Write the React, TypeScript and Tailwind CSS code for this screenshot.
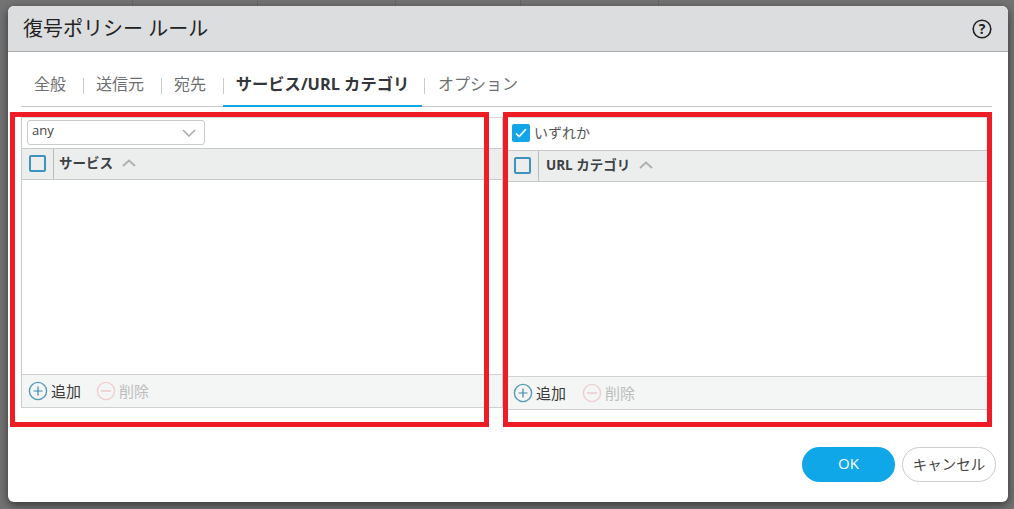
import React from "react";

const FONT = "font-['Open_Sans','Noto_Sans_CJK_JP',sans-serif]";

function SortUp() {
    return (
        <svg width="14" height="8" viewBox="0 0 14 8" fill="none" stroke="#aeb0b0" strokeWidth="2">
            <path d="M1 7l6-5.5L13 7" />
        </svg>
    );
}

function AddIcon() {
    return (
        <svg width="20" height="20" viewBox="0 0 20 20" fill="none">
            <circle cx="10" cy="10" r="8.6" stroke="#5b9aba" strokeWidth="1.4" />
            <path d="M10 5.5v9M5.5 10h9" stroke="#3f86aa" strokeWidth="1.2" />
        </svg>
    );
}

function RemoveIcon() {
    return (
        <svg width="20" height="20" viewBox="0 0 20 20" fill="none">
            <circle cx="10" cy="10" r="8.6" stroke="#efcfd0" strokeWidth="1.4" />
            <path d="M5 10h10" stroke="#e8c0c2" strokeWidth="1.2" />
        </svg>
    );
}

function EmptyCheck() {
    return <div className="mb-[1px] h-[17px] w-[17px] rounded-[2px] border-[2px] border-[#3d93bd] bg-[#eceeee]" />;
}

function GridHead({ label, wide }: { label: string; wide?: boolean }) {
    return (
        <div className="flex h-[32px] shrink-0 border-y border-[#c8c9c9] bg-[#eceeee]">
            <div className="flex w-[32px] shrink-0 items-center justify-center border-r border-[#b9baba]">
                <EmptyCheck />
            </div>
            <div className={`flex items-center gap-[9px] pb-[2px] ${wide ? "pl-[7px]" : "pl-[5px]"}`}>
                <span className="text-[13.5px] font-bold text-[#3d4145]">{label}</span>
                <SortUp />
            </div>
        </div>
    );
}

function GridFoot({ wide }: { wide?: boolean }) {
    return (
        <div className="flex h-[34px] shrink-0 items-center border-y border-[#cfd0d0] bg-[#f4f6f5] pl-[6px]">
            <AddIcon />
            <span className="ml-[3px] text-[15px] text-[#3a3a3a]">追加</span>
            <span className={`flex items-center ${wide ? "ml-[16px]" : "ml-[15px]"}`}>
                <RemoveIcon />
                <span className="ml-[3px] text-[15px] text-[#bdbdbd]">削除</span>
            </span>
        </div>
    );
}

export default function App() {
    const tabs = ["全般", "送信元", "宛先"];
    return (
        <div className={`relative h-[509px] w-[1014px] overflow-hidden bg-[#737373] pl-[8px] pt-[6px] ${FONT}`}>
            {/* table behind the dialog */}
            <div className="absolute left-0 top-0 flex h-[6px] w-full">
                {[133, 125, 138, 125, 138].map((w, i) => (
                    <div key={i} style={{ width: w }} className="h-full border-r border-[#666666]" />
                ))}
            </div>

            <div className="relative flex h-[496px] w-[1000px] flex-col rounded-[6px] bg-white shadow-[0_3px_10px_rgba(0,0,0,0.55)]">
                {/* Title bar */}
                <div className="flex h-[46px] shrink-0 items-center justify-between rounded-t-[6px] border-b-[1px] border-[#a9aaac] bg-[#dcdddf] pl-[15px] pr-[16px]">
                    <span className="text-[20px] text-[#222222]">復号ポリシー ルール</span>
                    <svg width="20" height="20" viewBox="0 0 20 20" fill="none">
                        <circle cx="10" cy="10" r="8.8" stroke="#222222" strokeWidth="1.6" />
                        <text x="10" y="15" textAnchor="middle" fontSize="14" fontWeight="700" fill="#222222">?</text>
                    </svg>
                </div>

                {/* Tabs */}
                <div className="ml-[13px] mr-[16px] mt-[16px] flex h-[39px] shrink-0 items-stretch border-b border-[#c6c7c7]">
                    {tabs.map((t, i) => (
                        <React.Fragment key={t}>
                            <div className={`flex items-center pb-[6px] text-[16px] text-[#6d6f72] ${i === 0 ? "w-[62px] pl-[13px]" : i === 1 ? "w-[77px] pl-[12px]" : "w-[61px] pl-[12px]"}`}>
                                {t}
                            </div>
                            <div className="mt-[10px] h-[16px] w-px bg-[#c9caca]" />
                        </React.Fragment>
                    ))}
                    <div className="-mb-px -ml-px mr-[2px] flex w-[199px] items-center justify-center border-b-2 border-[#12a6e6] pb-[5px] text-[16.3px] font-bold text-[#33363a]">
                        サービス/URL カテゴリ
                    </div>
                    <div className="mt-[10px] h-[16px] w-px bg-[#c9caca]" />
                    <div className="flex items-center pb-[6px] pl-[13px] text-[16px] text-[#6d6f72]">オプション</div>
                </div>

                {/* Panels */}
                <div className="ml-[13px] mt-[10px] flex h-[293px] w-[967px] shrink-0 items-start gap-[4px] border-t border-[#d4d5d5]">
                    <div className="flex h-[290px] w-[482px] flex-col border-x border-[#c8c9c9]">
                        <div className="flex h-[30px] shrink-0 items-start pl-[5px] pt-[2px]">
                            <div className="flex h-[25px] w-[178px] items-center justify-between rounded-[3px] border border-[#c9caca] bg-white pb-[3px] pl-[4px] pr-[8px]">
                                <span className="text-[13px] text-[#444444]">any</span>
                                <svg className="mt-[3px]" width="14" height="8" viewBox="0 0 14 8" fill="none" stroke="#a8a9a9" strokeWidth="1.5">
                                    <path d="M1 1l6 6 6-6" />
                                </svg>
                            </div>
                        </div>
                        <GridHead label="サービス" />
                        <div className="flex-1" />
                        <GridFoot />
                    </div>
                    <div className="flex h-[292px] w-[481px] flex-col">
                        <div className="flex h-[32px] shrink-0 items-center gap-[4px] pb-[3px] pl-[5px]">
                            <div className="flex h-[18px] w-[18px] items-center justify-center rounded-[2px] bg-[#12a6e6]">
                                <svg width="12" height="10" viewBox="0 0 12 10" fill="none" stroke="#ffffff" strokeWidth="1.6">
                                    <path d="M1 5.5l3.2 3L11 1" />
                                </svg>
                            </div>
                            <span className="text-[14px] text-[#555555]">いずれか</span>
                        </div>
                        <GridHead label="URL カテゴリ" wide />
                        <div className="flex-1" />
                        <GridFoot wide />
                    </div>
                </div>

                {/* Buttons */}
                <div className="mt-[37px] flex items-center justify-end pr-[12px]">
                    <button className="h-[35px] w-[93px] rounded-[18px] bg-[#0fa7e8] pb-[2px] text-[15px] text-white">OK</button>
                    <button className="ml-[7px] h-[35px] w-[94px] rounded-[18px] border border-[#cccccc] bg-white text-[14.5px] text-[#444444]">
                        キャンセル
                    </button>
                </div>
            </div>

            {/* red annotation boxes */}
            <div className="absolute left-[10px] top-[112px] h-[315px] w-[479px] border-[5px] border-[#ee1c25]" />
            <div className="absolute left-[503px] top-[112px] h-[315px] w-[489px] border-[5px] border-[#ee1c25]" />
        </div>
    );
}
